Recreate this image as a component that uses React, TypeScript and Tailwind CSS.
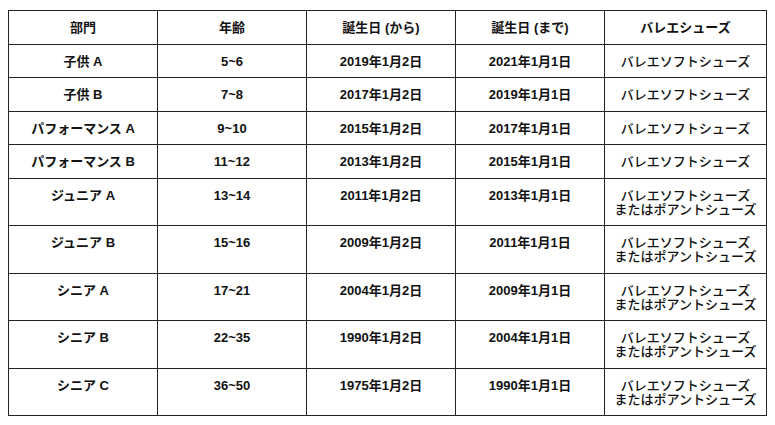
const rows: [string, string, string, string, string[]][] = [
  ["子供 A", "5~6", "2019年1月2日", "2021年1月1日", ["バレエソフトシューズ"]],
  ["子供 B", "7~8", "2017年1月2日", "2019年1月1日", ["バレエソフトシューズ"]],
  ["パフォーマンス A", "9~10", "2015年1月2日", "2017年1月1日", ["バレエソフトシューズ"]],
  ["パフォーマンス B", "11~12", "2013年1月2日", "2015年1月1日", ["バレエソフトシューズ"]],
  ["ジュニア A", "13~14", "2011年1月2日", "2013年1月1日", ["バレエソフトシューズ", "またはポアントシューズ"]],
  ["ジュニア B", "15~16", "2009年1月2日", "2011年1月1日", ["バレエソフトシューズ", "またはポアントシューズ"]],
  ["シニア A", "17~21", "2004年1月2日", "2009年1月1日", ["バレエソフトシューズ", "またはポアントシューズ"]],
  ["シニア B", "22~35", "1990年1月2日", "2004年1月1日", ["バレエソフトシューズ", "またはポアントシューズ"]],
  ["シニア C", "36~50", "1975年1月2日", "1990年1月1日", ["バレエソフトシューズ", "またはポアントシューズ"]],
];

const cell = "border border-[#222] pt-[10px] pb-[8.5px] px-1 text-center align-top leading-[14px]";

export default function App() {
  return (
    <div
      className="bg-white w-[775px] h-[425px] pt-[10px] pl-2 text-[13px] text-[#111]"
      style={{ fontFamily: '"Liberation Sans", Arial, "Noto Sans CJK JP", sans-serif' }}
    >
      <table className="w-[758px] table-fixed border-collapse">
        <colgroup>
          <col className="w-[149px]" />
          <col className="w-[149px]" />
          <col className="w-[149px]" />
          <col className="w-[149px]" />
          <col className="w-[162px]" />
        </colgroup>
        <thead>
          <tr className="font-bold">
            <th className={cell}>部門</th>
            <th className={cell}>年齢</th>
            <th className={cell}>誕生日 (から)</th>
            <th className={cell}>誕生日 (まで)</th>
            <th className={cell}>バレエシューズ</th>
          </tr>
        </thead>
        <tbody>
          {rows.map(([div, age, from, to, shoes]) => (
            <tr key={div}>
              <td className={cell + " font-bold"}>{div}</td>
              <td className={cell + " font-bold"}>{age}</td>
              <td className={cell + " font-bold"}>{from}</td>
              <td className={cell + " font-bold"}>{to}</td>
              <td className={cell + " font-medium"}>
                {shoes.map((s) => (
                  <div key={s}>{s}</div>
                ))}
              </td>
            </tr>
          ))}
        </tbody>
      </table>
    </div>
  );
}
